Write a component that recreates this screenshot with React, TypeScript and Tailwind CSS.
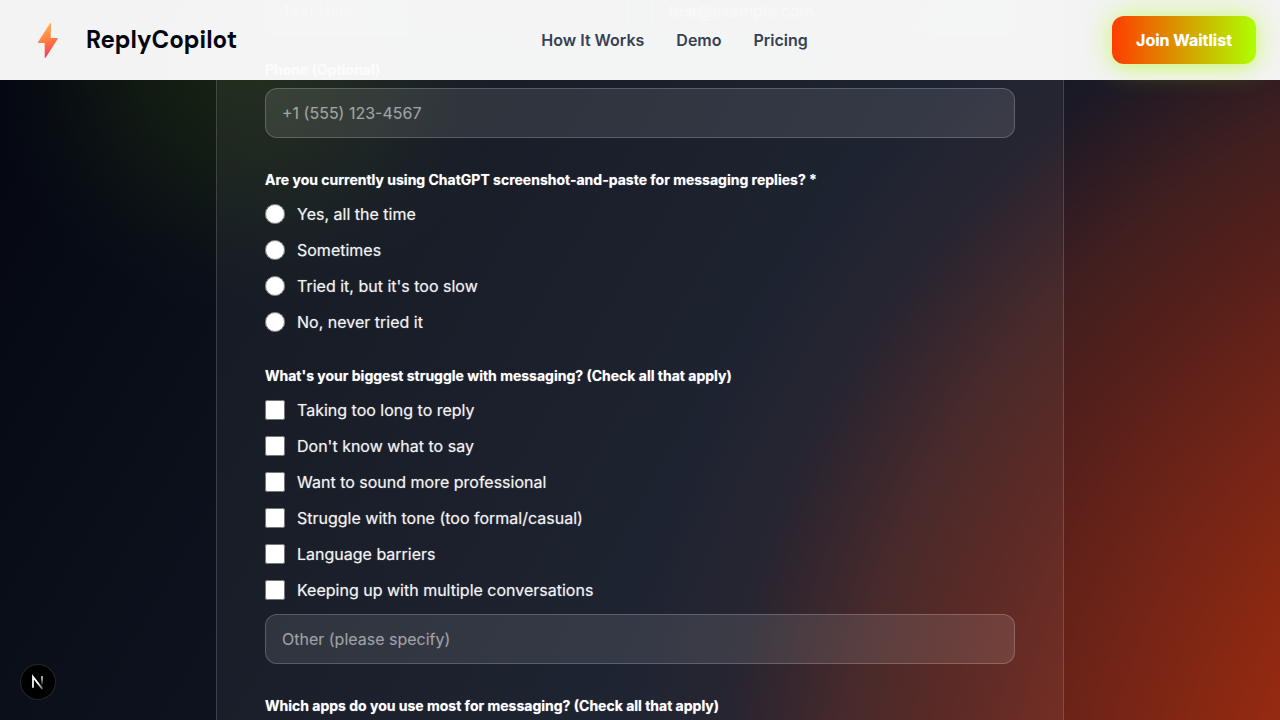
import type { ReactNode } from "react";

const usage = ["Yes, all the time", "Sometimes", "Tried it, but it's too slow", "No, never tried it"];
const struggles = [
  "Taking too long to reply",
  "Don't know what to say",
  "Want to sound more professional",
  "Struggle with tone (too formal/casual)",
  "Language barriers",
  "Keeping up with multiple conversations",
];

const field =
  "block h-[50px] w-full rounded-xl border border-white/20 bg-white/10 px-4 text-base text-white placeholder:text-white/45 [text-shadow:0_0_1px_rgba(255,255,255,0.2)]";
const legend = "mb-3 block text-sm leading-5 font-bold text-white";

function Choice({ type, name, children }: { type: "radio" | "checkbox"; name: string; children: ReactNode }) {
  return (
    <label className="flex items-center gap-3 text-base leading-6 text-white/90">
      <input type={type} name={name} className="size-5" />
      <span>{children}</span>
    </label>
  );
}

function Bolt() {
  return (
    <svg viewBox="0 0 48 48" className="size-12" aria-hidden="true">
      <defs>
        <linearGradient id="bolt" x1="0.3" y1="0" x2="0.5" y2="1">
          <stop offset="0" stopColor="#ffb84d" />
          <stop offset="0.5" stopColor="#ff7f45" />
          <stop offset="1" stopColor="#f2385a" />
        </linearGradient>
      </defs>
      <path
        d="M26 7.200Q27 6.500 27 7.500L26.700 22H33.200Q34.200 22 33.600 23L21.800 41.500Q20.700 42.500 20.700 41.300V27H14.500Q13.500 27 14.100 26Z"
        fill="url(#bolt)"
      />
    </svg>
  );
}

export default function App() {
  return (
    <div className="h-screen overflow-hidden bg-[#050810] font-['Inter',sans-serif]">
      <header className="relative z-20 flex h-20 items-center justify-between bg-[#fbfbfb]/97 px-6">
        <a href="#" className="flex items-center gap-3.5 font-['DM_Sans','Inter',sans-serif] text-2xl font-bold text-[#030712]">
          <Bolt />
          ReplyCopilot
        </a>
        <nav className="flex gap-8 text-base font-semibold text-gray-700">
          <a href="#how">How It Works</a>
          <a href="#demo">Demo</a>
          <a href="#pricing">Pricing</a>
        </nav>
        <button className="h-12 rounded-xl bg-linear-to-r/srgb from-[#ff3d00] to-[#aeff00] px-6 text-base font-bold text-white shadow-[0_0_30px_rgba(174,255,0,0.5),0_4px_12px_rgba(174,255,0,0.2)] [text-shadow:0_0_1px_rgba(255,255,255,0.5)]">
          Join Waitlist
        </button>
      </header>

      <main className="relative -mt-20 min-h-screen overflow-hidden bg-[radial-gradient(circle_at_calc(100%_+_400px)_860px,#962a10_424px,#6b2318_632px,#531f1b_745px,#3f1f20_840px,rgba(54,29,33,0.75)_900px,rgba(38,27,36,0.4)_970px,rgba(17,24,39,0)_1070px),linear-gradient(120deg,#030610_0%,#0b101b_27%,#131827_60%)]">
        <div className="absolute -top-52 -left-4 size-[520px] rounded-full bg-[radial-gradient(closest-side,rgba(60,90,10,0.32),rgba(60,90,10,0.2)_40%,rgba(60,90,10,0.06)_75%,transparent)]" />
        <form className="relative mx-auto -mt-3.5 w-[848px] max-w-full border-x border-white/15 bg-white/5 px-12 pb-12 [text-shadow:0_0_1px_rgba(255,255,255,0.5)]">
          <div className="grid grid-cols-2 gap-6">
            <input aria-label="Name" className={field} placeholder="Test User" />
            <input aria-label="Email" className={field} placeholder="test@example.com" />
          </div>
          <label htmlFor="phone" className="mt-6 mb-2 block text-sm leading-5 font-bold text-white">
            Phone (Optional)
          </label>
          <input id="phone" type="tel" className={field} placeholder="+1 (555) 123-4567" />

          <fieldset className="mt-8">
            <legend className={legend}>Are you currently using ChatGPT screenshot-and-paste for messaging replies? *</legend>
            <div className="flex flex-col gap-3">
              {usage.map((t) => (
                <Choice key={t} type="radio" name="usage">{t}</Choice>
              ))}
            </div>
          </fieldset>

          <fieldset className="mt-8">
            <legend className={legend}>What's your biggest struggle with messaging? (Check all that apply)</legend>
            <div className="flex flex-col gap-3">
              {struggles.map((t) => (
                <Choice key={t} type="checkbox" name="struggle">{t}</Choice>
              ))}
              <input aria-label="Other struggle" className={field} placeholder="Other (please specify)" />
            </div>
          </fieldset>

          <fieldset className="mt-8">
            <legend className={legend}>Which apps do you use most for messaging? (Check all that apply)</legend>
          </fieldset>
        </form>
      </main>

      <button
        aria-label="Open Next.js Dev Tools"
        className="fixed bottom-5 left-5 z-30 grid size-9 place-items-center rounded-full border border-white/15 bg-black"
      >
        <svg viewBox="0 0 14 14" className="size-4" fill="none" aria-hidden="true">
          <defs>
            <linearGradient id="slash" gradientUnits="userSpaceOnUse" x1="7" y1="8" x2="11" y2="13">
              <stop stopColor="#fff" />
              <stop offset="1" stopColor="#fff" stopOpacity="0.4" />
            </linearGradient>
            <linearGradient id="stem" x1="0" y1="0" x2="0" y2="1">
              <stop stopColor="#fff" />
              <stop offset="1" stopColor="#fff" stopOpacity="0" />
            </linearGradient>
          </defs>
          <path d="M2.600 12V2.500L10.800 13" stroke="url(#slash)" strokeWidth="1.500" />
          <path d="M9.800 2h1.400v8.500H9.800z" fill="url(#stem)" />
        </svg>
      </button>
    </div>
  );
}
